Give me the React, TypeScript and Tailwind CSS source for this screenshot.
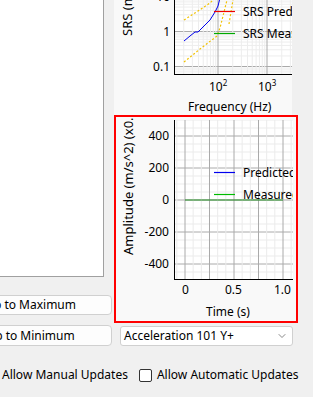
import { ChevronDown } from 'lucide-react';

const range = (a: number, b: number) => Array.from({ length: b - a + 1 }, (_, i) => a + i);

// top SRS plot (log/log), local coords of its svg
const srsH: { y: number; major: boolean }[] = [];
[66.5, 31.5, -3.5].forEach((y0) => {
  srsH.push({ y: y0, major: true });
  range(2, 9).forEach((k) => srsH.push({ y: y0 - Math.log10(k) * 35, major: false }));
});
range(6, 9).forEach((k) => srsH.push({ y: 66.5 + (1 - Math.log10(k)) * 35, major: false }));

const srsV: { x: number; major: boolean }[] = [];
[55, 104, 153].forEach((x0) => {
  srsV.push({ x: x0, major: true });
  range(2, 9).forEach((k) => srsV.push({ x: x0 + Math.log10(k) * 49, major: false }));
});

// bottom time plot
const timeH = range(0, 20).map((k) => ({ y: 3 + 8 * k, major: (k - 2) % 4 === 0 }));
const timeV = range(-1, 13).map((i) => ({ x: 69 + (i * 49) / 6, major: i % 3 === 0 }));

function SrsPlot() {
  return (
    <svg width="178" height="115" className="block shrink-0 bg-[#f9f9f9] text-[12px]">
      <defs>
        <clipPath id="srsClip">
          <rect x="60" y="-10" width="118" height="84" />
        </clipPath>
      </defs>
      <rect x="60" y="-10" width="118" height="84" fill="#fff" />
      <g clipPath="url(#srsClip)">
        {srsH.map((l, i) => (
          <line key={'h' + i} x1="60" x2="178" y1={l.y} y2={l.y} stroke={l.major ? '#aaaaaa' : '#ededed'} strokeWidth="1" />
        ))}
        {srsV.map((l, i) => (
          <line key={'v' + i} x1={l.x} x2={l.x} y1="-10" y2="74" stroke={l.major ? '#aaaaaa' : '#ededed'} strokeWidth="1" />
        ))}
        <polyline points="70,20 84,11 96,3 101,-2" fill="none" stroke="#f2c200" strokeWidth="1.2" strokeDasharray="2 2" />
        <polyline points="70,62 86,49 103,36 106,28 109,16 112,4 113,0" fill="none" stroke="#f2c200" strokeWidth="1.2" strokeDasharray="2 2" />
        <polyline points="115,24 117,12 119,0" fill="none" stroke="#f2c200" strokeWidth="1.2" strokeDasharray="2 2" />
        <polyline points="70,41 76,36 81,32 84,32 87,29 96,20 101,12 104,6 106,-2" fill="none" stroke="#0000ee" strokeWidth="1" />
        <line x1="100" x2="121" y1="11.5" y2="11.5" stroke="#ee0000" strokeWidth="1.2" />
        <line x1="100" x2="121" y1="33.5" y2="33.5" stroke="#00aa00" strokeWidth="1.2" />
        <text x="129" y="15.5" fill="#000">SRS Predicted</text>
        <text x="129" y="37.5" fill="#000">SRS Measured</text>
      </g>
      <line x1="60.5" x2="60.5" y1="-10" y2="74" stroke="#000" />
      <line x1="60" x2="178" y1="74.5" y2="74.5" stroke="#000" />
      <text x="56" y="0.5" textAnchor="end" fill="#000">10</text>
      <text x="56" y="36" textAnchor="end" fill="#000">1</text>
      <text x="56" y="71" textAnchor="end" fill="#000">0.1</text>
      <text x="95" y="91" fill="#000">
        10<tspan fontSize="8" dy="-5">2</tspan>
      </text>
      <text x="144" y="91" fill="#000">
        10<tspan fontSize="8" dy="-5">3</tspan>
      </text>
      <text x="74" y="111" fill="#000">Frequency (Hz)</text>
      <text transform="translate(18 36) rotate(-90)" fontSize="13" fill="#000">SRS (m/s^2)</text>
    </svg>
  );
}

function TimePlot() {
  return (
    <svg width="180" height="204" className="block bg-[#f9f9f9] text-[12px]">
      <defs>
        <clipPath id="timeClip">
          <rect x="58" y="3" width="119" height="160" />
        </clipPath>
      </defs>
      <rect x="58" y="3" width="119" height="160" fill="#fff" />
      <g clipPath="url(#timeClip)">
        {timeH.map((l, i) => (
          <line key={'h' + i} x1="58" x2="177" y1={l.y} y2={l.y} stroke={l.major ? '#aaaaaa' : '#ebebeb'} strokeWidth="1" />
        ))}
        {timeV.map((l, i) => (
          <line key={'v' + i} x1={l.x} x2={l.x} y1="3" y2="163" stroke={l.major ? '#aaaaaa' : '#ebebeb'} strokeWidth="1" />
        ))}
        <line x1="69" x2="167" y1="83" y2="83" stroke="#1f8a1f" strokeWidth="1.2" />
        <line x1="98" x2="119" y1="55.5" y2="55.5" stroke="#0000ee" strokeWidth="1.2" />
        <line x1="98" x2="119" y1="77.5" y2="77.5" stroke="#00bb00" strokeWidth="1.2" />
        <text x="127" y="59.5" fill="#000">Predicted</text>
        <text x="127" y="81.5" fill="#000">Measured</text>
      </g>
      <line x1="58.5" x2="58.5" y1="3" y2="163" stroke="#000" />
      <line x1="58" x2="177" y1="162.5" y2="162.5" stroke="#000" />
      {[
        ['400', 19],
        ['200', 51],
        ['0', 83],
        ['-200', 115],
        ['-400', 147],
      ].map(([t, y]) => (
        <text key={t} x="53" y={Number(y) + 4} textAnchor="end" fill="#000">
          {t}
        </text>
      ))}
      <text x="66" y="177" fill="#000">0</text>
      <text x="109" y="177" fill="#000">0.5</text>
      <text x="158" y="177" fill="#000">1.0</text>
      <text x="90" y="199" fill="#000">Time (s)</text>
      <text transform="translate(17 138) rotate(-90)" fontSize="13" fill="#000">Amplitude (m/s^2) (x0.1)</text>
    </svg>
  );
}

function Checkbox() {
  return <span className="inline-block w-[13px] h-[13px] shrink-0 rounded-[2px] border border-[#333333] bg-white" />;
}

export default function App() {
  return (
    <div className="w-[313px] h-[397px] overflow-hidden bg-[#f0f0f0] font-['Noto_Sans',sans-serif] text-[12px] text-black">
      <div className="flex">
        {/* left column */}
        <div className="w-[114px] shrink-0">
          <div className="h-[277px] w-[104px] bg-white border-r border-b border-[#a0a0a0]" />
          <button className="mt-[18px] ml-[-64px] w-[176px] h-[20px] rounded-[4px] border border-[#d0d0d0] bg-[#fdfdfd] flex items-center justify-center whitespace-nowrap">
            Jump to Maximum
          </button>
          <button className="mt-[10px] ml-[-64px] w-[176px] h-[21px] rounded-[4px] border border-[#d0d0d0] bg-[#fdfdfd] flex items-center justify-center whitespace-nowrap">
            Jump to Minimum
          </button>
        </div>

        {/* right column */}
        <div className="flex flex-col">
          <SrsPlot />
          <div className="w-[184px] h-[208px] border-2 border-[#ff0000] bg-[#f9f9f9]">
            <TimePlot />
          </div>
          <div className="mt-[3px] ml-[6px] w-[173px] h-[20px] rounded-[3px] border border-[#d0d0d0] bg-white flex items-center justify-between pl-[3px] pr-[4px]">
            <span className="whitespace-nowrap">Acceleration 101 Y+</span>
            <ChevronDown size={12} strokeWidth={1.5} className="text-[#606060]" />
          </div>
        </div>
      </div>

      {/* checkboxes */}
      <div className="mt-[21px] flex items-center h-[16px] whitespace-nowrap">
        <div className="ml-[-15px] flex items-center gap-[4px]">
          <Checkbox />
          <span>Allow Manual Updates</span>
        </div>
        <div className="ml-[11px] flex items-center gap-[5px]">
          <Checkbox />
          <span>Allow Automatic Updates</span>
        </div>
      </div>
    </div>
  );
}
